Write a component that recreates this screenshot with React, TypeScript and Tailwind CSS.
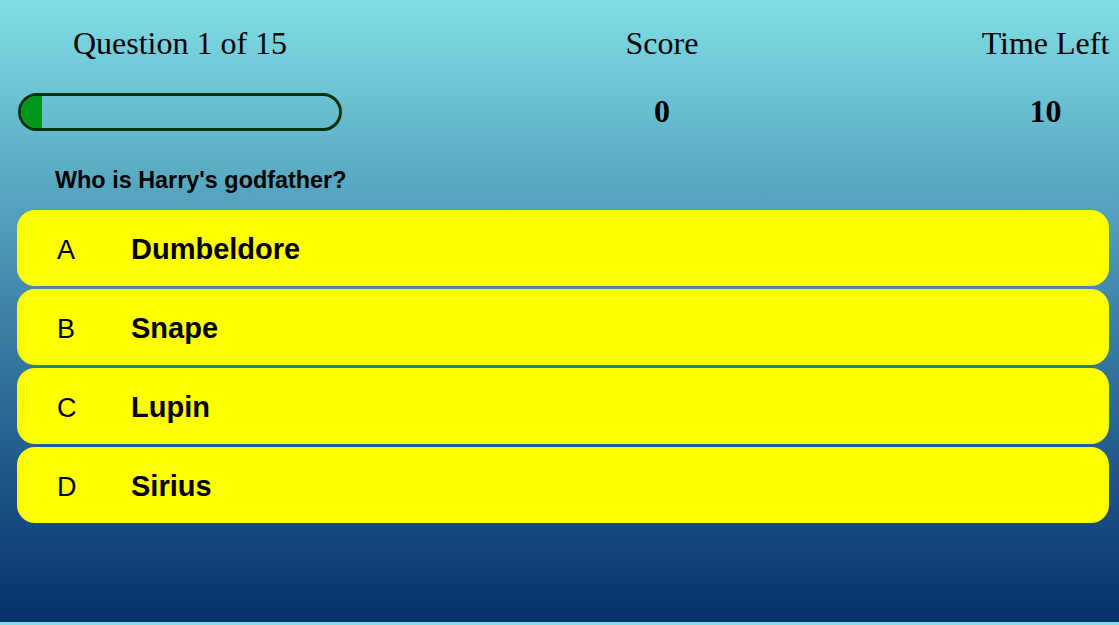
import React from 'react';

const answers = [
  { letter: 'A', text: 'Dumbeldore' },
  { letter: 'B', text: 'Snape' },
  { letter: 'C', text: 'Lupin' },
  { letter: 'D', text: 'Sirius' },
];

export default function App() {
  const progress = 1 / 15;

  return (
    <div className="min-h-screen bg-[#80dee5]">
      <div className="h-[622px] bg-gradient-to-b from-[#80dee5] to-[#08306b] pt-[24px]">
        {/* Header */}
        <div className="grid grid-cols-[360px_604px_1fr] font-['Liberation_Serif',serif] text-black">
          <div className="text-center text-[32px] leading-[38px]">Question 1 of 15</div>
          <div className="text-center text-[32px] leading-[38px]">Score</div>
          <div className="text-center text-[32px] leading-[38px] pl-[8px]">Time Left</div>

          <div className="pt-[31px] pl-[18px] pr-[18px]">
            <div className="h-[38px] rounded-full border-[3px] border-[#06330a] overflow-hidden">
              <div className="h-full bg-[#00961a]" style={{ width: `${progress * 100}%` }} />
            </div>
          </div>
          <div className="pt-[30px] text-center text-[32px] font-bold leading-[38px]">0</div>
          <div className="pt-[30px] text-center text-[32px] font-bold leading-[38px] pl-[8px]">10</div>
        </div>

        {/* Question */}
        <div className="pl-[55px] pt-[36px] pb-[16px] font-['Liberation_Sans',Arial,sans-serif] text-[23.4px] font-bold leading-[27px] text-black">
          Who is Harry's godfather?
        </div>

        {/* Answers */}
        <div className="flex flex-col gap-[3px] pl-[17px] pr-[10px] font-['Liberation_Sans',Arial,sans-serif]">
          {answers.map((a) => (
            <div key={a.letter} className="flex h-[76px] items-center rounded-[18px] bg-[#ffff00] pt-[4px] text-black">
              <span className="w-[114px] pl-[40px] text-[27px]">{a.letter}</span>
              <span className="text-[29px] font-bold">{a.text}</span>
            </div>
          ))}
        </div>
      </div>
    </div>
  );
}
